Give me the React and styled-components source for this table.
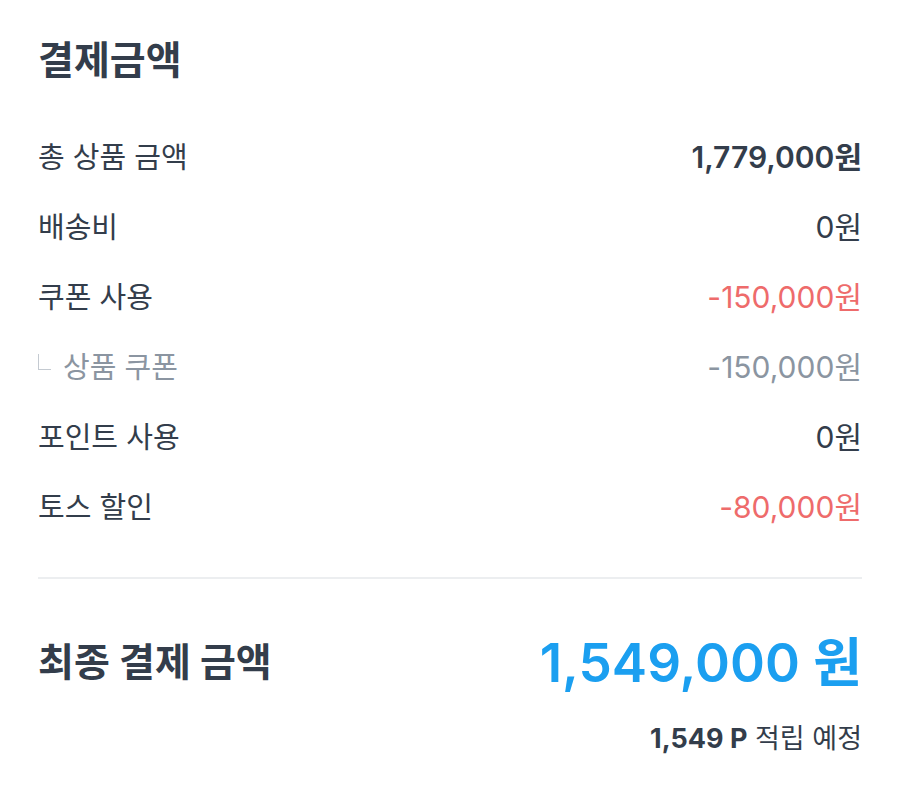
import React from 'react';
import styled, { createGlobalStyle } from 'styled-components';

const GlobalStyle = createGlobalStyle`
  html, body {
    margin: 0;
    padding: 0;
    background: #ffffff;
  }
  body {
    font-family: "Inter", "Noto Sans CJK KR", sans-serif;
    color: #333d4b;
  }
`;

const Container = styled.div`
  width: 900px;
  height: 790px;
  box-sizing: border-box;
  padding: 30px 38px 0 38px;
  background: #fff;
`;

const Title = styled.h2`
  margin: 0 0 30px;
  font-size: 39px;
  font-weight: 700;
  line-height: 60px;
  color: #333d4b;
`;

const List = styled.div`
  display: flex;
  flex-direction: column;
`;

const Row = styled.div`
  display: flex;
  align-items: center;
  justify-content: space-between;
  height: 70px;
`;

const Label = styled.span`
  display: flex;
  align-items: center;
  font-size: 29px;
  color: ${props => (props.sub ? '#8b95a1' : '#333d4b')};
`;

const SubMark = styled.span`
  display: inline-block;
  width: 12px;
  height: 15px;
  border-left: 1.5px solid #c4cad1;
  border-bottom: 1.5px solid #c4cad1;
  margin: 0 12px 6px 0;
`;

const Value = styled.span`
  font-size: 30px;
  letter-spacing: 0;
  font-weight: ${props => (props.bold ? 600 : 400)};
  color: ${props =>
    props.tone === 'red' ? '#ee6b6b' : props.tone === 'gray' ? '#8b95a1' : '#333d4b'};
`;

const Divider = styled.hr`
  border: none;
  border-top: 2px solid #eceef0;
  margin: 37px 0 0;
`;

const TotalRow = styled.div`
  display: flex;
  align-items: center;
  justify-content: space-between;
  margin-top: 42px;
`;

const TotalLabel = styled.span`
  font-size: 39px;
  font-weight: 700;
  color: #333d4b;
`;

const TotalValue = styled.span`
  font-size: 53px;
  font-weight: 600;
  color: #1b9ff0;
`;

const Point = styled.div`
  text-align: right;
  margin-top: 20px;
  font-size: 27px;
  color: #333d4b;

  b {
    font-weight: 700;
  }
`;

const rows = [
  { label: '총 상품 금액', value: '1,779,000원', bold: true },
  { label: '배송비', value: '0원' },
  { label: '쿠폰 사용', value: '-150,000원', tone: 'red' },
  { label: '상품 쿠폰', value: '-150,000원', tone: 'gray', sub: true },
  { label: '포인트 사용', value: '0원' },
  { label: '토스 할인', value: '-80,000원', tone: 'red' },
];

export default function App() {
  return (
    <Container>
      <GlobalStyle />
      <Title>결제금액</Title>
      <List>
        {rows.map(r => (
          <Row key={r.label}>
            <Label sub={r.sub}>
              {r.sub && <SubMark />}
              {r.label}
            </Label>
            <Value bold={r.bold} tone={r.tone}>
              {r.value}
            </Value>
          </Row>
        ))}
      </List>
      <Divider />
      <TotalRow>
        <TotalLabel>최종 결제 금액</TotalLabel>
        <TotalValue>1,549,000 원</TotalValue>
      </TotalRow>
      <Point>
        <b>1,549 P</b> 적립 예정
      </Point>
    </Container>
  );
}
